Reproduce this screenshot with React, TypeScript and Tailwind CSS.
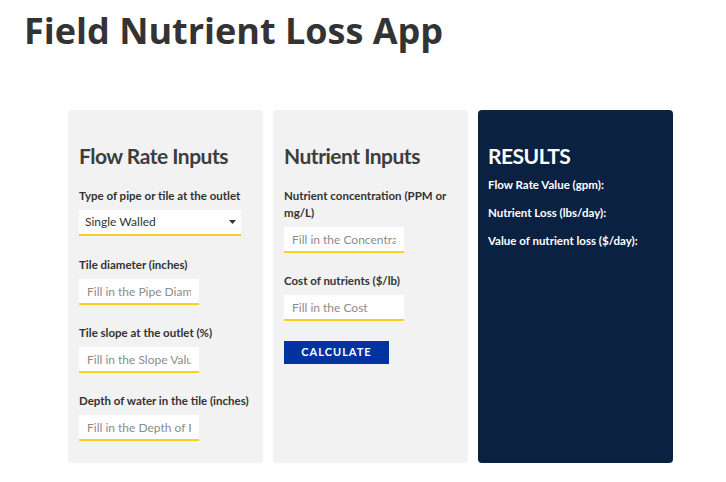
import React from "react";

const font = { fontFamily: "Lato, 'Noto Sans', sans-serif" };

function Field({ label, placeholder }: { label: string; placeholder: string }) {
  return (
    <div className="mt-[19px] first:mt-0">
      <label className="block text-[11.5px] font-bold leading-[17px] text-[#333]">{label}</label>
      <input
        type="text"
        placeholder={placeholder}
        className="mt-[6px] block h-[26px] w-[120px] border-b-2 border-[#f8d11c] bg-white px-2 text-[12px] text-[#333] outline-none placeholder:text-[#8c8c8c]"
      />
    </div>
  );
}

export default function App() {
  return (
    <div className="min-h-[482px] w-[726px] bg-white">
      <h1 className="pl-[24px] pt-[9px] font-['Open_Sans',sans-serif] text-[36px] font-bold leading-[43px] text-[#333]">
        Field Nutrient Loss App
      </h1>

      <div className="ml-[68px] mt-[58px] flex items-start gap-[10px]" style={font}>
        {/* flow rate */}
        <div className="h-[353px] w-[195px] rounded-[4px] bg-[#f2f2f2] pl-[11px] pr-[6px] pt-[33px]">
          <h2 className="text-[21px] font-bold leading-[26px] tracking-[-0.5px] text-[#3d3d3d]">Flow Rate Inputs</h2>
          <div className="mt-[18px]">
            <label className="block text-[11.5px] font-bold leading-[17px] text-[#333]">
              Type of pipe or tile at the outlet
            </label>
            <div className="relative mt-[6px] w-[162px]">
              <select className="block h-[26px] w-full appearance-none rounded-none border-b-2 border-[#f8d11c] bg-white px-[6px] text-[12px] text-[#333] outline-none">
                <option>Single Walled</option>
                <option>Double Walled</option>
              </select>
              <svg className="pointer-events-none absolute right-[5px] top-[10px]" width="7" height="4" viewBox="0 0 7 4">
                <path d="M0 0h7L3.5 4z" fill="#333" />
              </svg>
            </div>
          </div>
          <div className="mt-[20px]">
            <Field label="Tile diameter (inches)" placeholder="Fill in the Pipe Diameter" />
            <Field label="Tile slope at the outlet (%)" placeholder="Fill in the Slope Value" />
            <Field label="Depth of water in the tile (inches)" placeholder="Fill in the Depth of Flow" />
          </div>
        </div>

        {/* nutrients */}
        <div className="h-[353px] w-[195px] rounded-[4px] bg-[#f2f2f2] pl-[11px] pr-[10px] pt-[33px]">
          <h2 className="text-[21px] font-bold leading-[26px] tracking-[-0.5px] text-[#3d3d3d]">Nutrient Inputs</h2>
          <div className="mt-[18px]">
            <Field label="Nutrient concentration (PPM or mg/L)" placeholder="Fill in the Concentration" />
            <Field label="Cost of nutrients ($/lb)" placeholder="Fill in the Cost" />
          </div>
          <button className="mt-[20px] h-[23px] w-[105px] bg-[#0033a0] text-[11px] font-bold uppercase tracking-[1px] text-white">
            Calculate
          </button>
        </div>

        {/* results */}
        <div className="h-[353px] w-[195px] rounded-[4px] bg-[#0b2141] px-[10px] pt-[33px] text-white">
          <h2 className="text-[21px] font-bold leading-[26px] tracking-[-0.5px]">RESULTS</h2>
          <div className="mt-[7px] flex flex-col gap-[11px] text-[11.5px] font-bold leading-[17px]">
            <p>Flow Rate Value (gpm):</p>
            <p>Nutrient Loss (lbs/day):</p>
            <p>Value of nutrient loss ($/day):</p>
          </div>
        </div>
      </div>
    </div>
  );
}
